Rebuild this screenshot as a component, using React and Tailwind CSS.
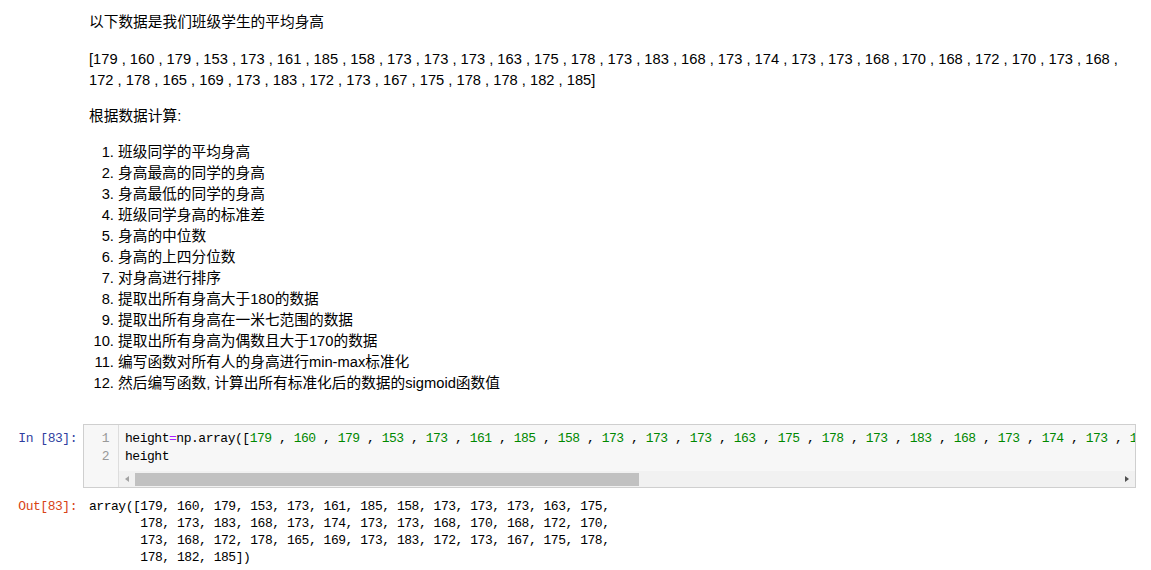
const heights = [179, 160, 179, 153, 173, 161, 185, 158, 173, 173, 173, 163, 175, 178, 173, 183, 168, 173, 174, 173, 173, 168, 170, 168, 172, 170, 173, 168, 172, 178, 165, 169, 173, 183, 172, 173, 167, 175, 178, 178, 182, 185];

const tasks = [
  '班级同学的平均身高',
  '身高最高的同学的身高',
  '身高最低的同学的身高',
  '班级同学身高的标准差',
  '身高的中位数',
  '身高的上四分位数',
  '对身高进行排序',
  '提取出所有身高大于180的数据',
  '提取出所有身高在一米七范围的数据',
  '提取出所有身高为偶数且大于170的数据',
  '编写函数对所有人的身高进行min-max标准化',
  '然后编写函数, 计算出所有标准化后的数据的sigmoid函数值',
];

const outLines = [
  'array([' + heights.slice(0, 13).join(', ') + ',',
  '       ' + heights.slice(13, 26).join(', ') + ',',
  '       ' + heights.slice(26, 39).join(', ') + ',',
  '       ' + heights.slice(39).join(', ') + '])',
];

const Markdown = () => (
  <div className="pl-[89px] pt-[12px] text-[14.7px] leading-[21px] text-black font-['Liberation_Sans','Noto_Sans_CJK_SC',sans-serif]">
    <p>以下数据是我们班级学生的平均身高</p>
    <p className="mt-[16px] whitespace-nowrap">
      <span className="block">[{heights.slice(0, 28).join(' , ')} ,</span>
      <span className="block">{heights.slice(28).join(' , ')}]</span>
    </p>
    <p className="mt-[15px]">根据数据计算:</p>
    <ol className="mt-[15px] list-decimal pl-[29px]">
      {tasks.map((t) => (
        <li key={t}>{t}</li>
      ))}
    </ol>
  </div>
);

const CodeCell = () => (
  <div className="mt-[30px] flex font-['Liberation_Mono',monospace] text-[13px] tracking-[-0.47px]">
    <div className="w-[83px] shrink-0 pr-[6px] pt-[6px] text-right leading-[18px] text-[#303F9F]">In&nbsp;[83]:</div>
    <div className="flex w-[1053px] border border-[#cfcfcf] bg-[#f7f7f7]">
      <div className="w-[35px] shrink-0 border-r border-[#dddddd] pr-[9px] pt-[5px] text-right leading-[18px] text-[#999999]">
        <div>1</div>
        <div>2</div>
      </div>
      <div className="flex min-w-0 flex-1 flex-col">
        <div className="overflow-hidden whitespace-pre pb-[5px] pl-[6px] pt-[5px] leading-[18px] text-black">
          <div>
            height<span className="text-[#AA22FF]">=</span>np.array([
            {heights.map((h, i) => (
              <span key={i}>
                <span className="text-[#008800]">{h}</span>
                {i < heights.length - 1 ? ' , ' : ''}
              </span>
            ))}
            ])
          </div>
          <div>height</div>
        </div>
        <div className="flex h-[16px] items-center bg-[#f1f1f1]">
          <svg width="16" height="16" viewBox="0 0 16 16" className="shrink-0">
            <path d="M10 5 L6 8 L10 11 Z" fill="#a3a3a3" />
          </svg>
          <div className="h-[13px] w-[504px] bg-[#c1c1c1]" />
          <div className="flex-1" />
          <svg width="16" height="16" viewBox="0 0 16 16" className="shrink-0">
            <path d="M6 5 L10 8 L6 11 Z" fill="#505050" />
          </svg>
        </div>
      </div>
    </div>
  </div>
);

const OutputCell = () => (
  <div className="mt-[10px] flex font-['Liberation_Mono',monospace] text-[13px] tracking-[-0.47px] leading-[17px]">
    <div className="w-[83px] shrink-0 pr-[6px] text-right text-[#D84315]">Out[83]:</div>
    <pre className="pl-[6px] font-['Liberation_Mono',monospace] text-black">
      {outLines.join('\n')}
    </pre>
  </div>
);

export default function App() {
  return (
    <div className="h-[570px] w-[1151px] overflow-hidden bg-white">
      <Markdown />
      <CodeCell />
      <OutputCell />
    </div>
  );
}
